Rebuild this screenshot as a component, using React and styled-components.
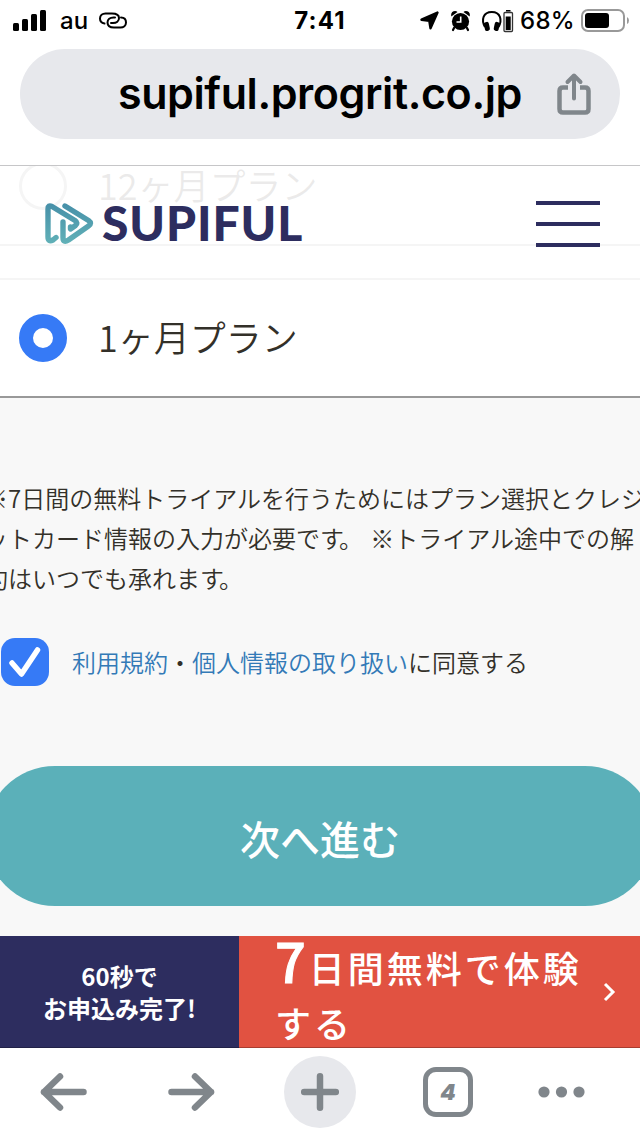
import React from 'react';
import styled, { createGlobalStyle, css } from 'styled-components';

const jp = `"Noto Sans CJK JP", sans-serif`;
const ui = `Inter, "Noto Sans CJK JP", sans-serif`;

const GlobalStyle = createGlobalStyle`
  * {
    box-sizing: border-box;
  }
  body {
    margin: 0;
    background: #fff;
    font-family: ${jp};
    color: #333029;
  }
`;

const Phone = styled.div`
  display: flex;
  flex-direction: column;
  width: 640px;
  height: 1136px;
  overflow: hidden;
  background: #fff;
`;

// Status bar
const StatusBar = styled.div`
  display: grid;
  grid-template-columns: 1fr auto 1fr;
  align-items: center;
  height: 41px;
  padding: 0 11px 0 13px;
  font-family: ${ui};
  color: #000;
`;

const StatusLeft = styled.div`
  display: flex;
  align-items: center;
`;

const StatusRight = styled.div`
  display: flex;
  align-items: center;
  justify-content: flex-end;
`;

const StatusIcons = styled.div`
  display: flex;
  align-items: center;
  gap: 12px;
`;

const Carrier = styled.span`
  margin: 0 11px 0 14px;
  font-size: 24px;
  font-weight: 500;
  line-height: 40px;
`;

const Clock = styled.span`
  padding-right: 2px;
  font-size: 24px;
  font-weight: 700;
  letter-spacing: 1.2px;
  line-height: 40px;
`;

const Percent = styled.span`
  margin: 0 6px 0 7px;
  font-size: 24px;
  font-weight: 500;
  letter-spacing: 0.3px;
  line-height: 40px;
`;

// Address bar
const AddressArea = styled.div`
  height: 125px;
  padding: 8px 20px 0;
  border-bottom: 1px solid #c6c6c8;
`;

const AddressBar = styled.div`
  display: flex;
  align-items: center;
  justify-content: space-between;
  height: 90px;
  padding: 0 29px 0 98px;
  border-radius: 45px;
  background: #e7e8ec;
`;

const Url = styled.span`
  font-family: ${ui};
  font-size: 43px;
  font-weight: 600;
  letter-spacing: -0.42px;
  line-height: 88px;
  padding-bottom: 2px;
  white-space: nowrap;
  color: #000;
`;

// Web page
const Viewport = styled.div`
  position: relative;
  display: flex;
  flex-direction: column;
  height: 882px;
  overflow: hidden;
  background: #f8f8f8;
`;

const SiteHeader = styled.header`
  position: absolute;
  top: 0;
  left: 0;
  right: 0;
  display: flex;
  align-items: center;
  height: 116px;
  padding: 0 40px 0 45px;
  background: rgba(255, 255, 255, 0.9);
`;

const Brand = styled.span`
  flex: 1;
  margin-left: 7px;
  padding-bottom: 2px;
  font-family: Lato, sans-serif;
  font-size: 48px;
  font-weight: 900;
  letter-spacing: 0.9px;
  line-height: 58px;
  color: #2d2d5f;
`;

const MenuButton = styled.button`
  display: flex;
  flex-direction: column;
  gap: 17px;
  width: 64px;
  padding: 0;
  border: 0;
  background: none;
`;

const MenuLine = styled.span`
  height: 4px;
  background: #2d2d5f;
`;

const Plan = styled.label`
  display: flex;
  align-items: center;
  gap: 31px;
  height: 120px;
  margin: ${props => (props.$first ? '-40px -8px 32px' : '0 -8px')};
  padding-left: 25px;
  border: 2px solid #999;
  border-radius: 8px;
  background: #fff;
  font-size: 36px;
  font-weight: 350;
  line-height: 54px;
`;

const PlanName = styled.span`
  padding-bottom: 4px;
`;

const Radio = styled.span`
  width: 48px;
  height: 48px;
  border-radius: 50%;
  border: ${props => (props.$checked ? '14px solid #367af6' : '3px solid #999')};
  background: #fff;
`;

const Notice = styled.p`
  margin: 80px 0 0 -16px;
  font-size: 24px;
  font-weight: 350;
  line-height: 40px;
  white-space: nowrap;
`;

const NoticeLine = styled.span`
  display: block;
`;

// Full stop pulled towards the character before it
const Stop = styled.span`
  margin: 0 2px 0 -5px;
`;

const Agreement = styled.label`
  display: flex;
  align-items: center;
  gap: 23px;
  height: 48px;
  margin: 40px 0 0 1px;
  font-size: 24px;
  font-weight: 350;
  line-height: 40px;
`;

const CheckBox = styled.span`
  display: flex;
  width: 48px;
  height: 48px;
  border-radius: 14px;
  background: #367af6;
`;

const Link = styled.a`
  color: #337ab7;
`;

const NextButton = styled.button`
  height: 140px;
  margin: 80px -15px 0;
  padding: 3px 0 0;
  border: 0;
  border-radius: 70px;
  background: #5bb0b9;
  font-family: ${jp};
  font-size: 40px;
  font-weight: 500;
  line-height: 60px;
  color: #fff;
`;

const Banner = styled.div`
  display: flex;
  height: 112px;
  margin-top: 30px;
  color: #fff;
`;

const bannerPart = css`
  border-bottom: 1px solid rgba(0, 0, 0, 0.25);
`;

const BannerNote = styled.div`
  ${bannerPart}
  width: 239px;
  padding-top: 24px;
  background: #2d2d5f;
  font-size: 24px;
  font-weight: 700;
  line-height: 32px;
  text-align: center;
`;

const BannerAction = styled.div`
  ${bannerPart}
  flex: 1;
  display: flex;
  align-items: center;
  justify-content: space-between;
  padding: 0 24px 0 36px;
  background: #e15241;
`;

const BannerText = styled.div`
  display: grid;
  gap: 5px;
  font-size: 36px;
  font-weight: 500;
  letter-spacing: 3px;
  line-height: 56px;
  white-space: nowrap;
`;

const BannerLine = styled.div`
  height: 56px;
`;

const BigDigit = styled.span`
  font-size: 54px;
  line-height: 1;
  -webkit-text-stroke: 1px #fff;
`;

// Browser toolbar
const Toolbar = styled.nav`
  display: grid;
  grid-template-columns: 127px 129px 128px 128px 98px;
  align-items: center;
  justify-items: center;
  height: 88px;
  color: #80868b;
`;

const AddTab = styled.span`
  display: flex;
  align-items: center;
  justify-content: center;
  width: 72px;
  height: 72px;
  border-radius: 50%;
  background: #e7e8ec;
`;

const TabCount = styled.span`
  display: flex;
  align-items: center;
  justify-content: center;
  width: 50px;
  height: 50px;
  border: 5px solid #80868b;
  border-radius: 13px;
  font-family: ${ui};
  font-size: 22px;
  font-style: italic;
  font-weight: 900;
  line-height: 40px;
`;

const Icon = styled.svg`
  display: block;
  flex: none;
  overflow: visible;
`;

const SignalIcon = () => (
  <Icon width="33" height="21" viewBox="0 0 33 21">
    <rect x="0" y="13" width="6" height="8" rx="1.5" />
    <rect x="9" y="9" width="6" height="12" rx="1.5" />
    <rect x="18" y="4" width="6" height="17" rx="1.5" />
    <rect x="27" y="0" width="6" height="21" rx="1.5" />
  </Icon>
);

const HotspotIcon = () => (
  <Icon width="28" height="18" viewBox="0 0 28 18" fill="none" stroke="#000" strokeWidth="2" strokeLinecap="round">
    <path d="M5.500 11.500C2.500 11 1 9 1 6.500C1 3.500 3.500 1.500 6.500 1.500H13C17 1.500 20 3 20 6C20 9 17.500 11 14 11H12" />
    <path d="M22 5.500C25 5.500 27 7.500 27 10.500C27 13.500 24.500 15.500 21.500 15.500H15C11 15.500 8.500 13.500 8.500 10.500C8.500 7.500 11 5.500 14.500 5.500H16" />
  </Icon>
);

const LocationIcon = () => (
  <Icon width="19" height="19" viewBox="0 0 19 19">
    <path d="M17.500 1.500L1.500 8.700L9.300 9.700L10.500 17.300Z" stroke="#000" strokeWidth="2.400" strokeLinejoin="round" />
  </Icon>
);

const AlarmIcon = () => (
  <Icon width="19" height="20" viewBox="0 0 19 20">
    <path d="M3 17L2 19M16 17L17 19" stroke="#000" strokeWidth="2.200" strokeLinecap="round" />
    <path d="M.3 5.500Q-.5 1.500 2.500 .3Q5 -.5 6.500 1ZM18.700 5.500Q19.500 1.500 16.500 .3Q14 -.5 12.500 1Z" />
    <circle cx="9.500" cy="10.500" r="8.600" />
    <path d="M9.700 5.500V11H5.500" fill="none" stroke="#fff" strokeWidth="1.600" />
  </Icon>
);

const HeadphonesIcon = () => (
  <Icon width="31" height="22" viewBox="0 0 31 22">
    <path d="M3 17C-1 10 1 2 9.800 2C18.500 2 20.500 10 16.500 17" fill="none" stroke="#000" strokeWidth="2" />
    <rect x="2.300" y="12" width="5" height="9" rx="2" transform="rotate(-12 4.500 16)" />
    <rect x="12.300" y="12" width="5" height="9" rx="2" transform="rotate(12 15 16)" />
    <rect x="22" y="2.500" width="8.500" height="19" rx="1" fill="none" stroke="#333" strokeWidth="1.300" />
    <rect x="24" y="0" width="4.500" height="1.500" />
    <rect x="23.700" y="6.500" width="5" height="13.500" />
  </Icon>
);

const BatteryIcon = () => (
  <Icon width="48" height="23" viewBox="0 0 48 23">
    <rect x="1" y="1" width="42" height="21" rx="6" fill="none" stroke="#999" strokeWidth="2" />
    <rect x="4" y="4" width="24" height="15" rx="3" />
    <path d="M46 8Q48 9 48 11.500Q48 14 46 15Z" fill="#999" />
  </Icon>
);

const ShareIcon = () => (
  <Icon width="34" height="42" viewBox="0 0 34 42" fill="none" stroke="#80868b" strokeWidth="4.500" strokeLinecap="round" strokeLinejoin="round">
    <path d="M11 14.500H6Q2.500 14.500 2.500 18V36Q2.500 39.500 6 39.500H28Q31.500 39.500 31.500 36V18Q31.500 14.500 28 14.500H23" strokeLinecap="butt" />
    <path d="M17 25.500V4M10.500 9L17 2.500L23.500 9" strokeWidth="4" />
  </Icon>
);

const LogoMark = () => (
  <Icon width="50" height="42" viewBox="0 0 50 42" fill="none" stroke="url(#mark)" strokeWidth="5.400" strokeLinecap="round" strokeLinejoin="round">
    <defs>
      <linearGradient id="mark" x1="0" y1="0" x2="0" y2="42" gradientUnits="userSpaceOnUse">
        <stop offset="0" stopColor="#468fa8" />
        <stop offset="1" stopColor="#62b2b8" />
      </linearGradient>
    </defs>
    <path d="M11 34.500L8 37Q3 39.500 3 34V6Q3 1.500 7 3.500L30 17.500Q33.500 20 30.500 22.500L25.500 26V24" />
    <path d="M20 3L43.500 17.500Q47.500 20.300 43.500 23L23.500 37Q18 40.500 18 34.500V19" />
  </Icon>
);

const CheckIcon = () => (
  <Icon width="48" height="48" viewBox="0 0 48 48" fill="none" stroke="#fff" strokeWidth="5.500" strokeLinecap="round" strokeLinejoin="round">
    <path d="M11 25L20.500 36L36.500 12" />
  </Icon>
);

const ChevronIcon = () => (
  <Icon width="14" height="20" viewBox="0 0 14 20" fill="none" stroke="#fff" strokeWidth="3">
    <path d="M3 2L11 10L3 18" />
  </Icon>
);

const ArrowIcon = ({ forward }) => (
  <Icon width="47" height="38" viewBox="0 0 47 38" fill="none" stroke="currentColor" strokeWidth="6.500" strokeLinecap="round" strokeLinejoin="round">
    <path d={forward ? 'M3.500 19H43M27 3.500L43 19L27 34.500' : 'M43.500 19H4M20 3.500L4 19L20 34.500'} />
  </Icon>
);

const PlusIcon = () => (
  <Icon width="38" height="38" viewBox="0 0 38 38" stroke="currentColor" strokeWidth="6.500" strokeLinecap="round">
    <path d="M19 3.200V34.800M3.200 19H34.800" />
  </Icon>
);

const MoreIcon = () => (
  <Icon width="47" height="12" viewBox="0 0 47 12" fill="currentColor">
    <circle cx="6" cy="6" r="5.600" />
    <circle cx="23.500" cy="6" r="5.600" />
    <circle cx="41" cy="6" r="5.600" />
  </Icon>
);

const App = () => {
  return (
    <Phone>
      <GlobalStyle />
      <StatusBar>
        <StatusLeft>
          <SignalIcon />
          <Carrier>au</Carrier>
          <HotspotIcon />
        </StatusLeft>
        <Clock>7:41</Clock>
        <StatusRight>
          <StatusIcons>
            <LocationIcon />
            <AlarmIcon />
            <HeadphonesIcon />
          </StatusIcons>
          <Percent>68%</Percent>
          <BatteryIcon />
        </StatusRight>
      </StatusBar>
      <AddressArea>
        <AddressBar>
          <Url>supiful.progrit.co.jp</Url>
          <ShareIcon />
        </AddressBar>
      </AddressArea>
      <Viewport>
        <Plan $first>
          <Radio />
          <PlanName>12ヶ月プラン</PlanName>
        </Plan>
        <Plan>
          <Radio $checked />
          <PlanName>1ヶ月プラン</PlanName>
        </Plan>
        <Notice>
          <NoticeLine>※7日間の無料トライアルを行うためにはプラン選択とクレジ</NoticeLine>
          <NoticeLine>
            ットカード情報の入力が必要です<Stop>。</Stop> ※トライアル途中での解
          </NoticeLine>
          <NoticeLine>
            約はいつでも承れます<Stop>。</Stop>
          </NoticeLine>
        </Notice>
        <Agreement>
          <CheckBox>
            <CheckIcon />
          </CheckBox>
          <span>
            <Link>利用規約</Link>・<Link>個人情報の取り扱い</Link>に同意する
          </span>
        </Agreement>
        <NextButton>次へ進む</NextButton>
        <Banner>
          <BannerNote>
            60秒で
            <br />
            お申込み完了!
          </BannerNote>
          <BannerAction>
            <BannerText>
              <BannerLine>
                <BigDigit>7</BigDigit>日間無料で体験
              </BannerLine>
              <BannerLine>する</BannerLine>
            </BannerText>
            <ChevronIcon />
          </BannerAction>
        </Banner>
        <SiteHeader>
          <LogoMark />
          <Brand>SUPIFUL</Brand>
          <MenuButton>
            <MenuLine />
            <MenuLine />
            <MenuLine />
          </MenuButton>
        </SiteHeader>
      </Viewport>
      <Toolbar>
        <ArrowIcon />
        <ArrowIcon forward />
        <AddTab>
          <PlusIcon />
        </AddTab>
        <TabCount>4</TabCount>
        <MoreIcon />
      </Toolbar>
    </Phone>
  );
};

export default App;
